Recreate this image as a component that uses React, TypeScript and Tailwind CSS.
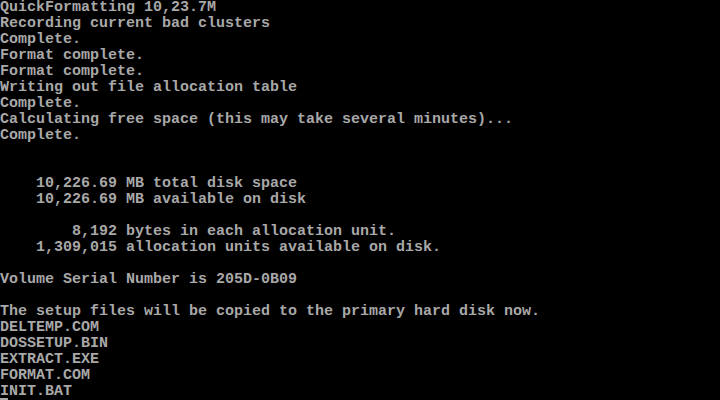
const lines = [
  'QuickFormatting 10,23.7M',
  'Recording current bad clusters',
  'Complete.',
  'Format complete.',
  'Format complete.',
  'Writing out file allocation table',
  'Complete.',
  'Calculating free space (this may take several minutes)...',
  'Complete.',
  '',
  '',
  '    10,226.69 MB total disk space',
  '    10,226.69 MB available on disk',
  '',
  '        8,192 bytes in each allocation unit.',
  '    1,309,015 allocation units available on disk.',
  '',
  'Volume Serial Number is 205D-0B09',
  '',
  'The setup files will be copied to the primary hard disk now.',
  'DELTEMP.COM',
  'DOSSETUP.BIN',
  'EXTRACT.EXE',
  'FORMAT.COM',
];

export default function App() {
  return (
    <div className="w-[720px] h-[400px] overflow-hidden bg-black text-[#a8a8a8] font-['Liberation_Mono','DejaVu_Sans_Mono',monospace] font-bold text-[15px] leading-[16px]">
      {lines.map((line, i) => (
        <div key={i} className="h-[16px] whitespace-pre">
          {line}
        </div>
      ))}
      <div className="h-[16px] whitespace-pre">
        <span className="relative">
          I
          <span className="absolute left-0 bottom-0 w-[8px] h-[2px] bg-[#a8a8a8]" />
        </span>
        NIT.BAT
      </div>
    </div>
  );
}
